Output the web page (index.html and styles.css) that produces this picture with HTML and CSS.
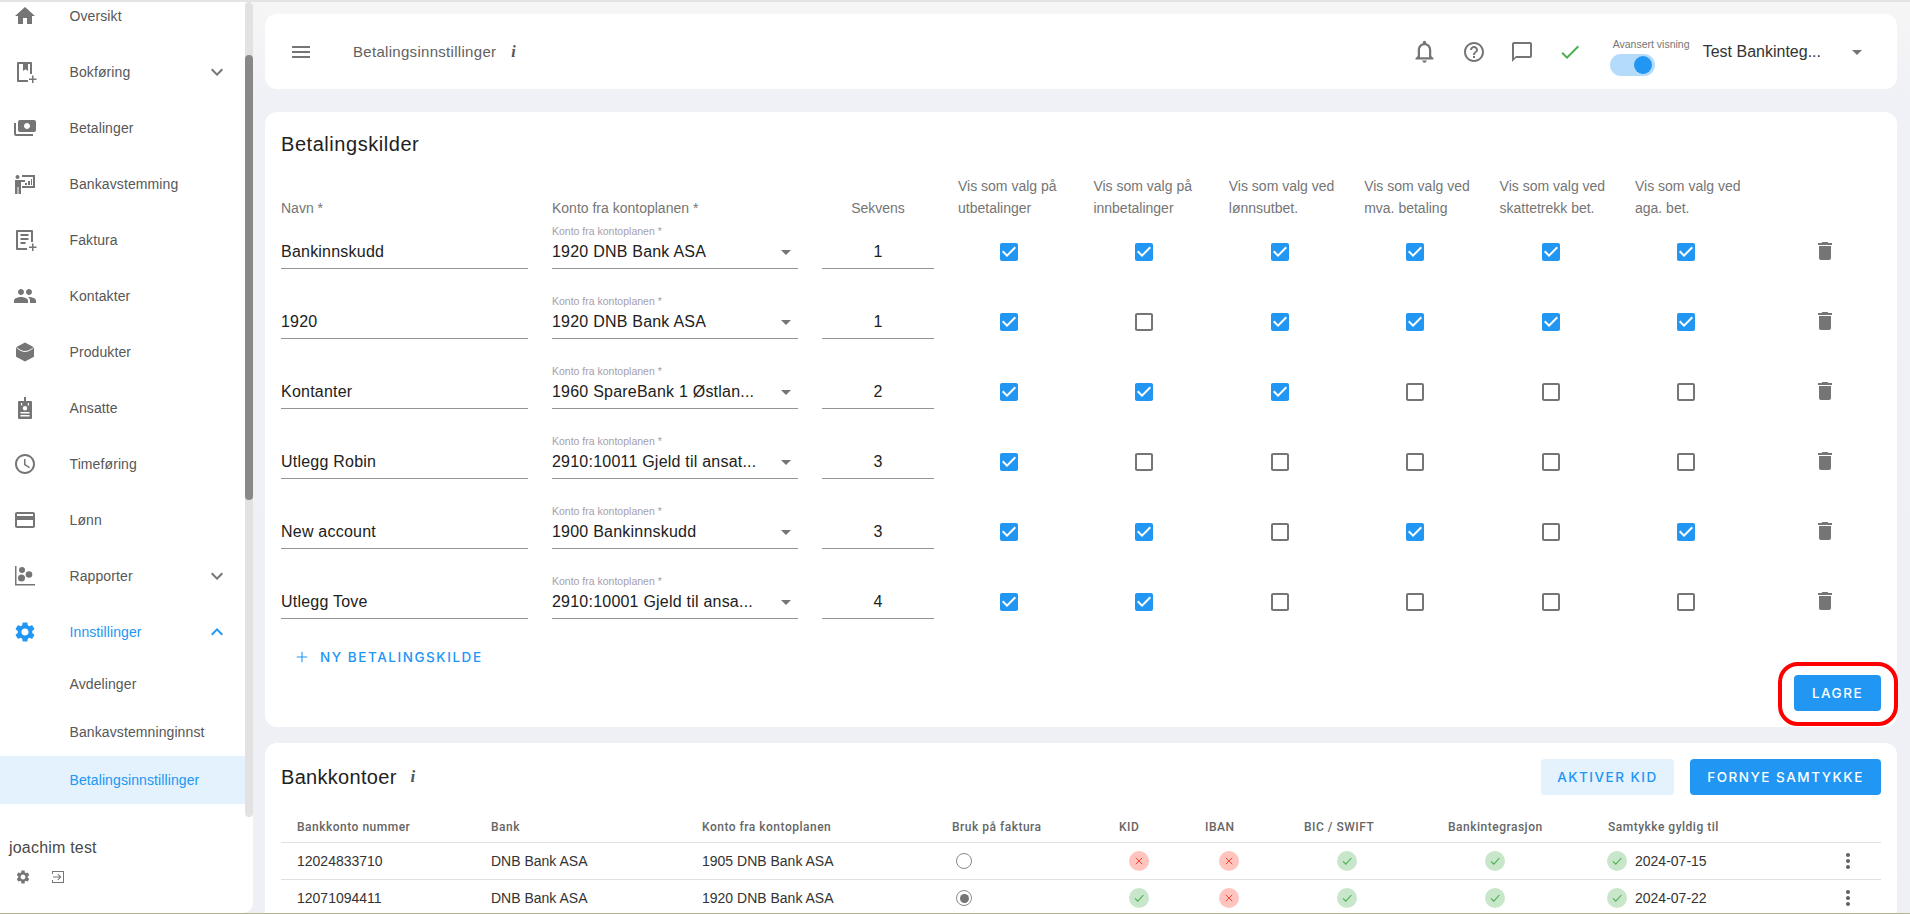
FILE: index.html
```html
<!DOCTYPE html>
<html lang="no">
<head>
<meta charset="utf-8">
<title>Betalingsinnstillinger</title>
<link rel="stylesheet" href="styles.css">
</head>
<body>
<svg class="defs" width="0" height="0" aria-hidden="true">
  <symbol id="i-on" viewBox="0 0 24 24"><path d="M19 3H5c-1.11 0-2 .9-2 2v14c0 1.1.89 2 2 2h14c1.11 0 2-.9 2-2V5c0-1.1-.89-2-2-2zm-9 14l-5-5 1.41-1.41L10 14.17l7.59-7.59L19 8l-9 9z"/></symbol>
  <symbol id="i-off" viewBox="0 0 24 24"><path d="M19 5v14H5V5h14m0-2H5c-1.1 0-2 .89-2 2v14c0 1.1.9 2 2 2h14c1.1 0 2-.9 2-2V5c0-1.1-.9-2-2-2z"/></symbol>
  <symbol id="i-trash" viewBox="0 0 24 24"><path d="M6 19c0 1.1.9 2 2 2h8c1.1 0 2-.9 2-2V7H6v12zM19 4h-3.5l-1-1h-5l-1 1H5v2h14V4z"/></symbol>
  <symbol id="i-drop" viewBox="0 0 24 24"><path d="M7 10l5 5 5-5z"/></symbol>
  <symbol id="i-more" viewBox="0 0 24 24"><path d="M16.59 8.59L12 13.17 7.41 8.59 6 10l6 6 6-6z"/></symbol>
  <symbol id="i-less" viewBox="0 0 24 24"><path d="M12 8l-6 6 1.41 1.41L12 10.83l4.59 4.58L18 14z"/></symbol>
  <symbol id="i-gear" viewBox="0 0 24 24"><path d="M19.14 12.94c.04-.3.06-.61.06-.94 0-.32-.02-.64-.07-.94l2.03-1.58c.18-.14.23-.41.12-.61l-1.92-3.32c-.12-.22-.37-.29-.59-.22l-2.39.96c-.5-.38-1.03-.7-1.62-.94l-.36-2.54c-.04-.24-.24-.41-.48-.41h-3.84c-.24 0-.43.17-.47.41l-.36 2.54c-.59.24-1.13.57-1.62.94l-2.39-.96c-.22-.08-.47 0-.59.22L2.74 8.87c-.12.21-.08.47.12.61l2.03 1.58c-.05.3-.09.63-.09.94s.02.64.07.94l-2.03 1.58c-.18.14-.23.41-.12.61l1.92 3.32c.12.22.37.29.59.22l2.39-.96c.5.38 1.03.7 1.62.94l.36 2.54c.05.24.24.41.48.41h3.84c.24 0 .44-.17.47-.41l.36-2.54c.59-.24 1.13-.56 1.62-.94l2.39.96c.22.08.47 0 .59-.22l1.92-3.32c.12-.22.07-.47-.12-.61l-2.01-1.58zM12 15.6c-1.98 0-3.6-1.62-3.6-3.6s1.62-3.6 3.6-3.6 3.6 1.62 3.6 3.6-1.62 3.6-3.6 3.6z"/></symbol>
  <symbol id="i-kebab" viewBox="0 0 24 24"><path d="M12 8c1.1 0 2-.9 2-2s-.9-2-2-2-2 .9-2 2 .9 2 2 2zm0 2c-1.1 0-2 .9-2 2s.9 2 2 2 2-.9 2-2-.9-2-2-2zm0 6c-1.1 0-2 .9-2 2s.9 2 2 2 2-.9 2-2-.9-2-2-2z"/></symbol>
  <symbol id="i-ok" viewBox="0 0 20 20"><circle cx="10" cy="10" r="10" fill="#c8e6c9"/><path d="M6 10.4l2.8 2.8L14.4 7" fill="none" stroke="#4caf50" stroke-width="1.1"/></symbol>
  <symbol id="i-no" viewBox="0 0 20 20"><circle cx="10" cy="10" r="10" fill="#ffc4bd"/><path d="M6.8 6.8l6.4 6.4M13.2 6.8l-6.4 6.4" fill="none" stroke="#f44336" stroke-width="1"/></symbol>
</svg>

<aside class="sidebar">
  <div class="side-col">
    <nav class="nav">
      <ul class="nav-list">
        <li class="nav-item"><svg class="nav-ico" viewBox="0 0 24 24"><path d="M10 20v-6h4v6h5v-8h3L12 3 2 12h3v8z"/></svg><span>Oversikt</span></li>
        <li class="nav-item"><svg class="nav-ico" viewBox="0 0 24 24"><path d="M5 2h13a1 1 0 0 1 1 1v11h-2V4h-2v7l-2.500-1.800L10 11V4H6v16h9v2H5a1 1 0 0 1-1-1V3a1 1 0 0 1 1-1zM19 15.500h1.500V18.500H23.500V20H20.500V23H19V20H16V18.500H19z"/></svg><span>Bokføring</span><svg class="chev"><use href="#i-more"/></svg></li>
        <li class="nav-item"><svg class="nav-ico" viewBox="0 0 24 24"><g transform="matrix(-1 0 0 1 24 0)"><path d="M19 14V6c0-1.100-.9-2-2-2H3c-1.100 0-2 .9-2 2v8c0 1.100.9 2 2 2h14c1.100 0 2-.9 2-2zm-9-1c-1.660 0-3-1.340-3-3s1.340-3 3-3 3 1.340 3 3-1.340 3-3 3zm13-6v11c0 1.100-.9 2-2 2H4v-2h17V7h2z"/></g></svg><span>Betalinger</span></li>
        <li class="nav-item"><svg class="nav-ico" viewBox="0 0 24 24"><circle cx="4.500" cy="5" r="2"/><path d="M2 8h6l4 0v2H8v12H5.500v-7H4.500v7H2zM9 3h13v13H9v-2h11V5H9zM12 11h2v2h-2zM15 9h2v4h-2zM18 7h1v6h-1z"/></svg><span>Bankavstemming</span></li>
        <li class="nav-item"><svg class="nav-ico" viewBox="0 0 24 24"><path d="M4 2h15a1 1 0 0 1 1 1v11h-2V4H5v16h9v2H4a1 1 0 0 1-1-1V3a1 1 0 0 1 1-1zM7.500 6h8v2h-8zM7.500 10h8v2h-8zM7.500 14h5v2h-5zM19 15.500h1.500V18.500H23.500V20H20.500V23H19V20H16V18.500H19z"/></svg><span>Faktura</span></li>
        <li class="nav-item"><svg class="nav-ico" viewBox="0 0 24 24"><path d="M16 11c1.660 0 2.990-1.340 2.990-3S17.660 5 16 5c-1.660 0-3 1.340-3 3s1.340 3 3 3zm-8 0c1.660 0 2.990-1.340 2.990-3S9.660 5 8 5C6.340 5 5 6.340 5 8s1.340 3 3 3zm0 2c-2.330 0-7 1.170-7 3.500V19h14v-2.500c0-2.330-4.670-3.500-7-3.500zm8 0c-.29 0-.62.02-.97.05 1.160.84 1.970 1.970 1.970 3.450V19h6v-2.500c0-2.330-4.670-3.500-7-3.500z"/></svg><span>Kontakter</span></li>
        <li class="nav-item"><svg class="nav-ico" viewBox="0 0 24 24"><path d="M12 2.500l9 4.800v9.400l-9 4.800-9-4.800V7.300z"/><path d="M3.500 7.500c3 2.800 6 4 8.500 4s5.500-1.200 8.500-4" fill="none" stroke="#fff" stroke-width="1"/></svg><span>Produkter</span></li>
        <li class="nav-item"><svg class="nav-ico" viewBox="0 0 24 24"><path d="M11 1h2v4h5a1 1 0 0 1 1 1v16a1 1 0 0 1-1 1H6a1 1 0 0 1-1-1V6a1 1 0 0 1 1-1h5zM8 7v2.500h1.200V7zm6.800 0v2.500H16V7zM12 10a2.200 2.200 0 1 0 0 4.400A2.200 2.200 0 0 0 12 10zM7.500 16v1.500h9V16zm0 3v1.500h9V19z" fill-rule="evenodd"/></svg><span>Ansatte</span></li>
        <li class="nav-item"><svg class="nav-ico" viewBox="0 0 24 24"><path d="M11.990 2C6.470 2 2 6.480 2 12s4.470 10 9.990 10C17.520 22 22 17.520 22 12S17.520 2 11.990 2zM12 20c-4.420 0-8-3.580-8-8s3.580-8 8-8 8 3.580 8 8-3.580 8-8 8zm.5-13H11v6l5.250 3.150.75-1.230-4.500-2.670z"/></svg><span>Timeføring</span></li>
        <li class="nav-item"><svg class="nav-ico" viewBox="0 0 24 24"><path d="M20 4H4c-1.110 0-1.990.89-1.990 2L2 18c0 1.110.89 2 2 2h16c1.110 0 2-.89 2-2V6c0-1.110-.89-2-2-2zm0 14H4v-6h16v6zm0-10H4V6h16v2z"/></svg><span>Lønn</span></li>
        <li class="nav-item"><svg class="nav-ico" viewBox="0 0 24 24"><path d="M2 2h1.500v18H22v1.500H2z"/><circle cx="9" cy="6" r="3"/><circle cx="8.500" cy="14" r="3.500"/><circle cx="16" cy="10.500" r="3.300"/></svg><span>Rapporter</span><svg class="chev"><use href="#i-more"/></svg></li>
        <li class="nav-item is-open"><svg class="nav-ico"><use href="#i-gear"/></svg><span>Innstillinger</span><svg class="chev"><use href="#i-less"/></svg></li>
        <li class="nav-sub">Avdelinger</li>
        <li class="nav-sub">Bankavstemninginnst</li>
        <li class="nav-sub is-active">Betalingsinnstillinger</li>
      </ul>
    </nav>
    <div class="user">
      <div class="user-name">joachim test</div>
      <div class="user-tools">
        <svg class="tool-ico"><use href="#i-gear"/></svg>
        <svg class="tool-ico" viewBox="0 0 16 16"><path d="M2.500 2h11a.5.5 0 0 1 .5.500v11a.5.5 0 0 1-.5.500h-11a.5.5 0 0 1-.5-.5V11h1v2h10V3H3v2H2V2.500a.5.5 0 0 1 .5-.5zM3 7.500h6.500L7.500 5.500l.7-.7L11.400 8l-3.200 3.200-.7-.7 2-2H3z"/></svg>
      </div>
    </div>
  </div>
  <div class="track"><div class="thumb"></div></div>
</aside>

<main class="main">
  <header class="topbar">
    <svg class="ico menu" viewBox="0 0 24 24"><path d="M3 18h18v-2H3v2zm0-5h18v-2H3v2zm0-7v2h18V6H3z"/></svg>
    <span class="top-title">Betalingsinnstillinger</span>
    <i class="info">i</i>
    <div class="top-right">
      <svg class="ico bell" viewBox="0 0 24 24"><path d="M12 22c1.100 0 2-.9 2-2h-4c0 1.100.9 2 2 2zm6-6v-5c0-3.070-1.630-5.640-4.500-6.320V4c0-.83-.67-1.500-1.500-1.500s-1.500.67-1.500 1.500v.68C7.640 5.360 6 7.920 6 11v5l-2 2v1h16v-1l-2-2zm-2 1H8v-6c0-2.480 1.510-4.500 4-4.500s4 2.020 4 4.500v6z"/></svg>
      <svg class="ico" viewBox="0 0 24 24"><path d="M11 18h2v-2h-2v2zm1-16C6.480 2 2 6.480 2 12s4.480 10 10 10 10-4.480 10-10S17.520 2 12 2zm0 18c-4.410 0-8-3.590-8-8s3.590-8 8-8 8 3.590 8 8-3.590 8-8 8zm0-14c-2.210 0-4 1.790-4 4h2c0-1.100.9-2 2-2s2 .9 2 2c0 2-3 1.750-3 5h2c0-2.250 3-2.500 3-5 0-2.210-1.790-4-4-4z"/></svg>
      <svg class="ico" viewBox="0 0 24 24"><path d="M20 2H4c-1.100 0-2 .9-2 2v18l4-4h14c1.100 0 2-.9 2-2V4c0-1.100-.9-2-2-2zm0 14H6l-2 2V4h16v12z"/></svg>
      <svg class="ico ok" viewBox="0 0 24 24"><path d="M9 16.170L4.830 12l-1.420 1.410L9 19 21 7l-1.410-1.410z"/></svg>
      <div class="view-toggle">
        <div class="view-label">Avansert visning</div>
        <div class="switch"><span class="knob"></span></div>
      </div>
      <span class="company">Test Bankinteg...</span>
      <svg class="ico company-arrow"><use href="#i-drop"/></svg>
    </div>
  </header>

  <section class="card sources">
    <h2 class="card-title">Betalingskilder</h2>
    <div class="src-grid src-head">
      <div>Navn *</div>
      <div>Konto fra kontoplanen *</div>
      <div class="center">Sekvens</div>
      <div>Vis som valg på<br>utbetalinger</div>
      <div>Vis som valg på<br>innbetalinger</div>
      <div>Vis som valg ved<br>lønnsutbet.</div>
      <div>Vis som valg ved<br>mva. betaling</div>
      <div>Vis som valg ved<br>skattetrekk bet.</div>
      <div>Vis som valg ved<br>aga. bet.</div>
      <div></div>
    </div>

    <div class="src-grid src-row">
      <div class="field"><span class="value">Bankinnskudd</span></div>
      <div class="field"><span class="mini">Konto fra kontoplanen *</span><span class="value select">1920 DNB Bank ASA<svg class="drop"><use href="#i-drop"/></svg></span></div>
      <div class="field seq"><span class="value">1</span></div>
      <svg class="check on"><use href="#i-on"/></svg>
      <svg class="check on"><use href="#i-on"/></svg>
      <svg class="check on"><use href="#i-on"/></svg>
      <svg class="check on"><use href="#i-on"/></svg>
      <svg class="check on"><use href="#i-on"/></svg>
      <svg class="check on"><use href="#i-on"/></svg>
      <svg class="trash"><use href="#i-trash"/></svg>
    </div>
    <div class="src-grid src-row">
      <div class="field"><span class="value">1920</span></div>
      <div class="field"><span class="mini">Konto fra kontoplanen *</span><span class="value select">1920 DNB Bank ASA<svg class="drop"><use href="#i-drop"/></svg></span></div>
      <div class="field seq"><span class="value">1</span></div>
      <svg class="check on"><use href="#i-on"/></svg>
      <svg class="check off"><use href="#i-off"/></svg>
      <svg class="check on"><use href="#i-on"/></svg>
      <svg class="check on"><use href="#i-on"/></svg>
      <svg class="check on"><use href="#i-on"/></svg>
      <svg class="check on"><use href="#i-on"/></svg>
      <svg class="trash"><use href="#i-trash"/></svg>
    </div>
    <div class="src-grid src-row">
      <div class="field"><span class="value">Kontanter</span></div>
      <div class="field"><span class="mini">Konto fra kontoplanen *</span><span class="value select">1960 SpareBank 1 Østlan...<svg class="drop"><use href="#i-drop"/></svg></span></div>
      <div class="field seq"><span class="value">2</span></div>
      <svg class="check on"><use href="#i-on"/></svg>
      <svg class="check on"><use href="#i-on"/></svg>
      <svg class="check on"><use href="#i-on"/></svg>
      <svg class="check off"><use href="#i-off"/></svg>
      <svg class="check off"><use href="#i-off"/></svg>
      <svg class="check off"><use href="#i-off"/></svg>
      <svg class="trash"><use href="#i-trash"/></svg>
    </div>
    <div class="src-grid src-row">
      <div class="field"><span class="value">Utlegg Robin</span></div>
      <div class="field"><span class="mini">Konto fra kontoplanen *</span><span class="value select">2910:10011 Gjeld til ansat...<svg class="drop"><use href="#i-drop"/></svg></span></div>
      <div class="field seq"><span class="value">3</span></div>
      <svg class="check on"><use href="#i-on"/></svg>
      <svg class="check off"><use href="#i-off"/></svg>
      <svg class="check off"><use href="#i-off"/></svg>
      <svg class="check off"><use href="#i-off"/></svg>
      <svg class="check off"><use href="#i-off"/></svg>
      <svg class="check off"><use href="#i-off"/></svg>
      <svg class="trash"><use href="#i-trash"/></svg>
    </div>
    <div class="src-grid src-row">
      <div class="field"><span class="value">New account</span></div>
      <div class="field"><span class="mini">Konto fra kontoplanen *</span><span class="value select">1900 Bankinnskudd<svg class="drop"><use href="#i-drop"/></svg></span></div>
      <div class="field seq"><span class="value">3</span></div>
      <svg class="check on"><use href="#i-on"/></svg>
      <svg class="check on"><use href="#i-on"/></svg>
      <svg class="check off"><use href="#i-off"/></svg>
      <svg class="check on"><use href="#i-on"/></svg>
      <svg class="check off"><use href="#i-off"/></svg>
      <svg class="check on"><use href="#i-on"/></svg>
      <svg class="trash"><use href="#i-trash"/></svg>
    </div>
    <div class="src-grid src-row">
      <div class="field"><span class="value">Utlegg Tove</span></div>
      <div class="field"><span class="mini">Konto fra kontoplanen *</span><span class="value select">2910:10001 Gjeld til ansa...<svg class="drop"><use href="#i-drop"/></svg></span></div>
      <div class="field seq"><span class="value">4</span></div>
      <svg class="check on"><use href="#i-on"/></svg>
      <svg class="check on"><use href="#i-on"/></svg>
      <svg class="check off"><use href="#i-off"/></svg>
      <svg class="check off"><use href="#i-off"/></svg>
      <svg class="check off"><use href="#i-off"/></svg>
      <svg class="check off"><use href="#i-off"/></svg>
      <svg class="trash"><use href="#i-trash"/></svg>
    </div>

    <button class="btn-add"><svg class="plus" viewBox="0 0 24 24"><path d="M19 12.700h-6.300V19h-1.400v-6.300H5v-1.400h6.300V5h1.400v6.300H19z"/></svg>NY BETALINGSKILDE</button>
    <div class="save-row">
      <div class="save-wrap">
        <button class="btn primary">LAGRE</button>
        <span class="marker"></span>
      </div>
    </div>
  </section>

  <section class="card banks">
    <div class="banks-top">
      <h2 class="card-title">Bankkontoer</h2>
      <i class="info big">i</i>
      <button class="btn soft">AKTIVER KID</button>
      <button class="btn primary">FORNYE SAMTYKKE</button>
    </div>
    <div class="bank-grid bank-head">
      <div>Bankkonto nummer</div><div>Bank</div><div>Konto fra kontoplanen</div><div>Bruk på faktura</div><div>KID</div><div>IBAN</div><div>BIC / SWIFT</div><div>Bankintegrasjon</div><div>Samtykke gyldig til</div>
    </div>
    <div class="bank-grid bank-row">
      <div>12024833710</div><div>DNB Bank ASA</div><div>1905 DNB Bank ASA</div>
      <div><span class="radio"></span></div>
      <div><svg class="chip kid"><use href="#i-no"/></svg></div>
      <div><svg class="chip iban"><use href="#i-no"/></svg></div>
      <div><svg class="chip bic"><use href="#i-ok"/></svg></div>
      <div><svg class="chip integ"><use href="#i-ok"/></svg></div>
      <div class="consent"><svg class="chip"><use href="#i-ok"/></svg><span>2024-07-15</span><svg class="kebab"><use href="#i-kebab"/></svg></div>
    </div>
    <div class="bank-grid bank-row">
      <div>12071094411</div><div>DNB Bank ASA</div><div>1920 DNB Bank ASA</div>
      <div><span class="radio selected"></span></div>
      <div><svg class="chip kid"><use href="#i-ok"/></svg></div>
      <div><svg class="chip iban"><use href="#i-no"/></svg></div>
      <div><svg class="chip bic"><use href="#i-ok"/></svg></div>
      <div><svg class="chip integ"><use href="#i-ok"/></svg></div>
      <div class="consent"><svg class="chip"><use href="#i-ok"/></svg><span>2024-07-22</span><svg class="kebab"><use href="#i-kebab"/></svg></div>
    </div>
  </section>
</main>
</body>
</html>
```

FILE: styles.css
```css
* { box-sizing: border-box; }

html { height: 914px; overflow: hidden; }

body {
  margin: 0;
  height: 914px;
  display: flex;
  overflow: hidden;
  border-top: 2px solid #e4e4e4;
  border-bottom: 1px solid #b4b48e;
  background: linear-gradient(#f6f6f6 0, #f0f1f6 100px, #eef0f6 100%);
  font-family: "Liberation Sans", Arial, sans-serif;
  color: #212121;
}

.defs { position: absolute; }

svg { display: block; fill: currentColor; flex: none; }

/* Sidebar */
.sidebar {
  width: 253px;
  flex: none;
  display: flex;
  background: #fff;
  border-bottom-right-radius: 10px;
  color: #5f5f5f;
}

.side-col { width: 245px; display: flex; flex-direction: column; }

.nav { height: 815px; overflow: hidden; flex: none; }

.nav-list { list-style: none; margin: -14px 0 0; padding: 0; }

.nav-item {
  height: 56px;
  display: flex;
  align-items: center;
  padding: 0 16px 0 13px;
  font-size: 14px;
  letter-spacing: .1px;
  color: #575757;
}

.nav-item > span { margin-left: 32.500px; }

.nav-ico { width: 24px; height: 24px; color: #757575; }

.chev { width: 24px; height: 24px; margin-left: auto; color: #757575; }

.nav-item.is-open, .nav-item.is-open svg { color: #2196f3; }

.nav-sub {
  height: 48px;
  line-height: 48px;
  padding-left: 69.500px;
  font-size: 14px;
  letter-spacing: .1px;
  color: #575757;
}

.nav-sub.is-active { background: #e3f2fd; color: #2196f3; }

.user { padding: 21px 0 0 9px; }

.user-name { font-size: 16px; line-height: 20px; color: #4a4a4a; letter-spacing: .2px; }

.user-tools {
  display: flex;
  gap: 19px;
  align-items: center;
  margin-top: 11px;
  padding-left: 6px;
}

.tool-ico { width: 16px; height: 16px; color: #757575; }

.track { width: 8px; height: 815px; background: #e2e2e2; border-radius: 4px; }

.thumb { height: 445px; margin-top: 53px; background: #888; border-radius: 4px; }

/* Main column */
.main {
  flex: 1;
  min-width: 0;
  padding: 12px 13px 0 12px;
  display: flex;
  flex-direction: column;
  overflow: hidden;
}

.topbar {
  height: 75px;
  flex: none;
  display: flex;
  align-items: center;
  padding-left: 24px;
  background: #fff;
  border-radius: 12px;
}

.ico { width: 24px; height: 24px; color: #757575; }

.bell { width: 27px; height: 27px; margin: 0 -.5px 0 -1.500px; }

.ok { color: #4caf50; }

.top-title {
  margin-left: 40px;
  font-size: 15px;
  letter-spacing: .3px;
  color: #616161;
}

.info {
  margin-left: 15px;
  font-family: "Liberation Serif", serif;
  font-size: 16px;
  font-weight: 700;
  font-style: italic;
  color: #555;
}

.info.big { margin-left: 14px; font-size: 17px; }

.top-right { margin-left: auto; display: flex; align-items: center; gap: 24px; padding-right: 28px; }

.view-toggle {
  width: 93px;
  align-self: flex-start;
  margin: 10px 0 0 4px;
}

.view-label {
  padding-left: 3px;
  margin-bottom: 4px;
  font-size: 10.5px;
  line-height: 12px;
  white-space: nowrap;
  color: #757575;
}

.switch {
  width: 45px;
  height: 22px;
  display: flex;
  justify-content: flex-end;
  align-items: center;
  padding-right: 3px;
  border-radius: 11px;
  background: #b5dbfb;
}

.knob { width: 18px; height: 18px; border-radius: 50%; background: #2196f3; }

.company { margin-left: -24px; font-size: 16px; color: #333; }

.company-arrow { color: #757575; }

.card {
  margin-top: 23px;
  padding: 20px 16px 16px;
  background: #fff;
  border-radius: 12px;
  flex: none;
}

.card-title {
  margin: 0;
  font-size: 20px;
  line-height: 24px;
  font-weight: 400;
  letter-spacing: .3px;
  color: #212121;
}

.sources .card-title { letter-spacing: .55px; }

/* Payment source table */
.src-grid {
  display: grid;
  grid-template-columns: 271px 270px 136px repeat(6, 135.4px) 1fr;
}

.src-head {
  margin-top: 19px;
  align-items: end;
  font-size: 14px;
  line-height: 22px;
  color: #757575;
}

.center { text-align: center; padding-right: 24px; }

.src-row { height: 70px; padding-top: 1px; align-items: start; }

.field {
  height: 49px;
  margin-right: 24px;
  display: flex;
  flex-direction: column;
  justify-content: flex-end;
  border-bottom: 1px solid #949494;
  padding-bottom: 4px;
}

.mini {
  margin-bottom: 3px;
  font-size: 10.5px;
  line-height: 12px;
  color: #a89eaa;
}

.value {
  font-size: 16px;
  line-height: 24px;
  letter-spacing: .22px;
  color: #212121;
}

.select { display: flex; justify-content: space-between; white-space: nowrap; }

.drop { width: 24px; height: 24px; color: #757575; }

.seq .value { text-align: center; }

.check { width: 24px; height: 24px; margin: 20px 0 0 39px; }

.check.on { color: #2196f3; }

.check.off { color: #757575; }

.trash { width: 24px; height: 24px; margin: 19px 0 0 43px; color: #757575; }

.btn-add {
  display: flex;
  align-items: center;
  height: 36px;
  margin: 0 0 0 12px;
  padding: 0;
  border: 0;
  background: none;
  color: #2196f3;
  font-family: Inter, "Liberation Sans", sans-serif;
  font-size: 13.500px;
  font-weight: 500;
  letter-spacing: 1.550px;
}

.plus { width: 18px; height: 18px; margin-right: 9px; }

.save-row { display: flex; justify-content: flex-end; }

.save-wrap { position: relative; }

.marker {
  position: absolute;
  top: -13px;
  right: -17px;
  bottom: -15px;
  left: -16px;
  border: 4px solid #f00;
  border-radius: 20px;
  pointer-events: none;
}

.btn {
  height: 36px;
  padding: 0 18px;
  border: 0;
  border-radius: 4px;
  font-family: Inter, "Liberation Sans", sans-serif;
  font-size: 13.500px;
  font-weight: 500;
  letter-spacing: 1.500px;
  white-space: nowrap;
}

.save-wrap .btn { display: block; width: 87px; padding: 0; }

.primary { background: #2196f3; color: #fff; }

.soft { background: #e3f2fd; color: #2196f3; }

/* Bank accounts table */
.banks { margin-top: 16px; padding-top: 16px; }

.banks-top { display: flex; align-items: center; gap: 0; }

.banks-top .soft { margin-left: auto; width: 133px; padding: 0; }

.banks-top .primary { margin-left: 16px; width: 191px; padding: 0; }

.bank-grid {
  display: grid;
  grid-template-columns: 194px 211px 250px 167px 86px 99px 144px 160px 1fr;
  align-items: center;
  border-bottom: 1px solid #e0e0e0;
}

.bank-grid > div { padding-left: 16px; }

.bank-head {
  height: 32px;
  margin-top: 16px;
  font-family: Roboto, "Liberation Sans", sans-serif;
  font-size: 12px;
  font-weight: 500;
  letter-spacing: .5px;
  color: #666;
}

.bank-row { height: 37px; font-size: 14px; color: #333; }

.chip { width: 20px; height: 20px; }

.kid { margin-left: 10px; }

.iban { margin-left: 14px; }

.bic { margin-left: 33px; }

.integ { margin-left: 37px; }

.radio {
  display: block;
  width: 16px;
  height: 16px;
  margin-left: 4px;
  border: 1.5px solid #8a8a8a;
  border-radius: 50%;
}

.radio.selected { padding: 2.500px; }

.radio.selected::after {
  content: "";
  display: block;
  height: 100%;
  border-radius: 50%;
  background: #757575;
}

.consent { display: flex; align-items: center; gap: 8px; }

.bank-grid > .consent { padding-left: 15px; }

.kebab { width: 24px; height: 24px; margin-left: auto; margin-right: 21px; color: #616161; }
```
